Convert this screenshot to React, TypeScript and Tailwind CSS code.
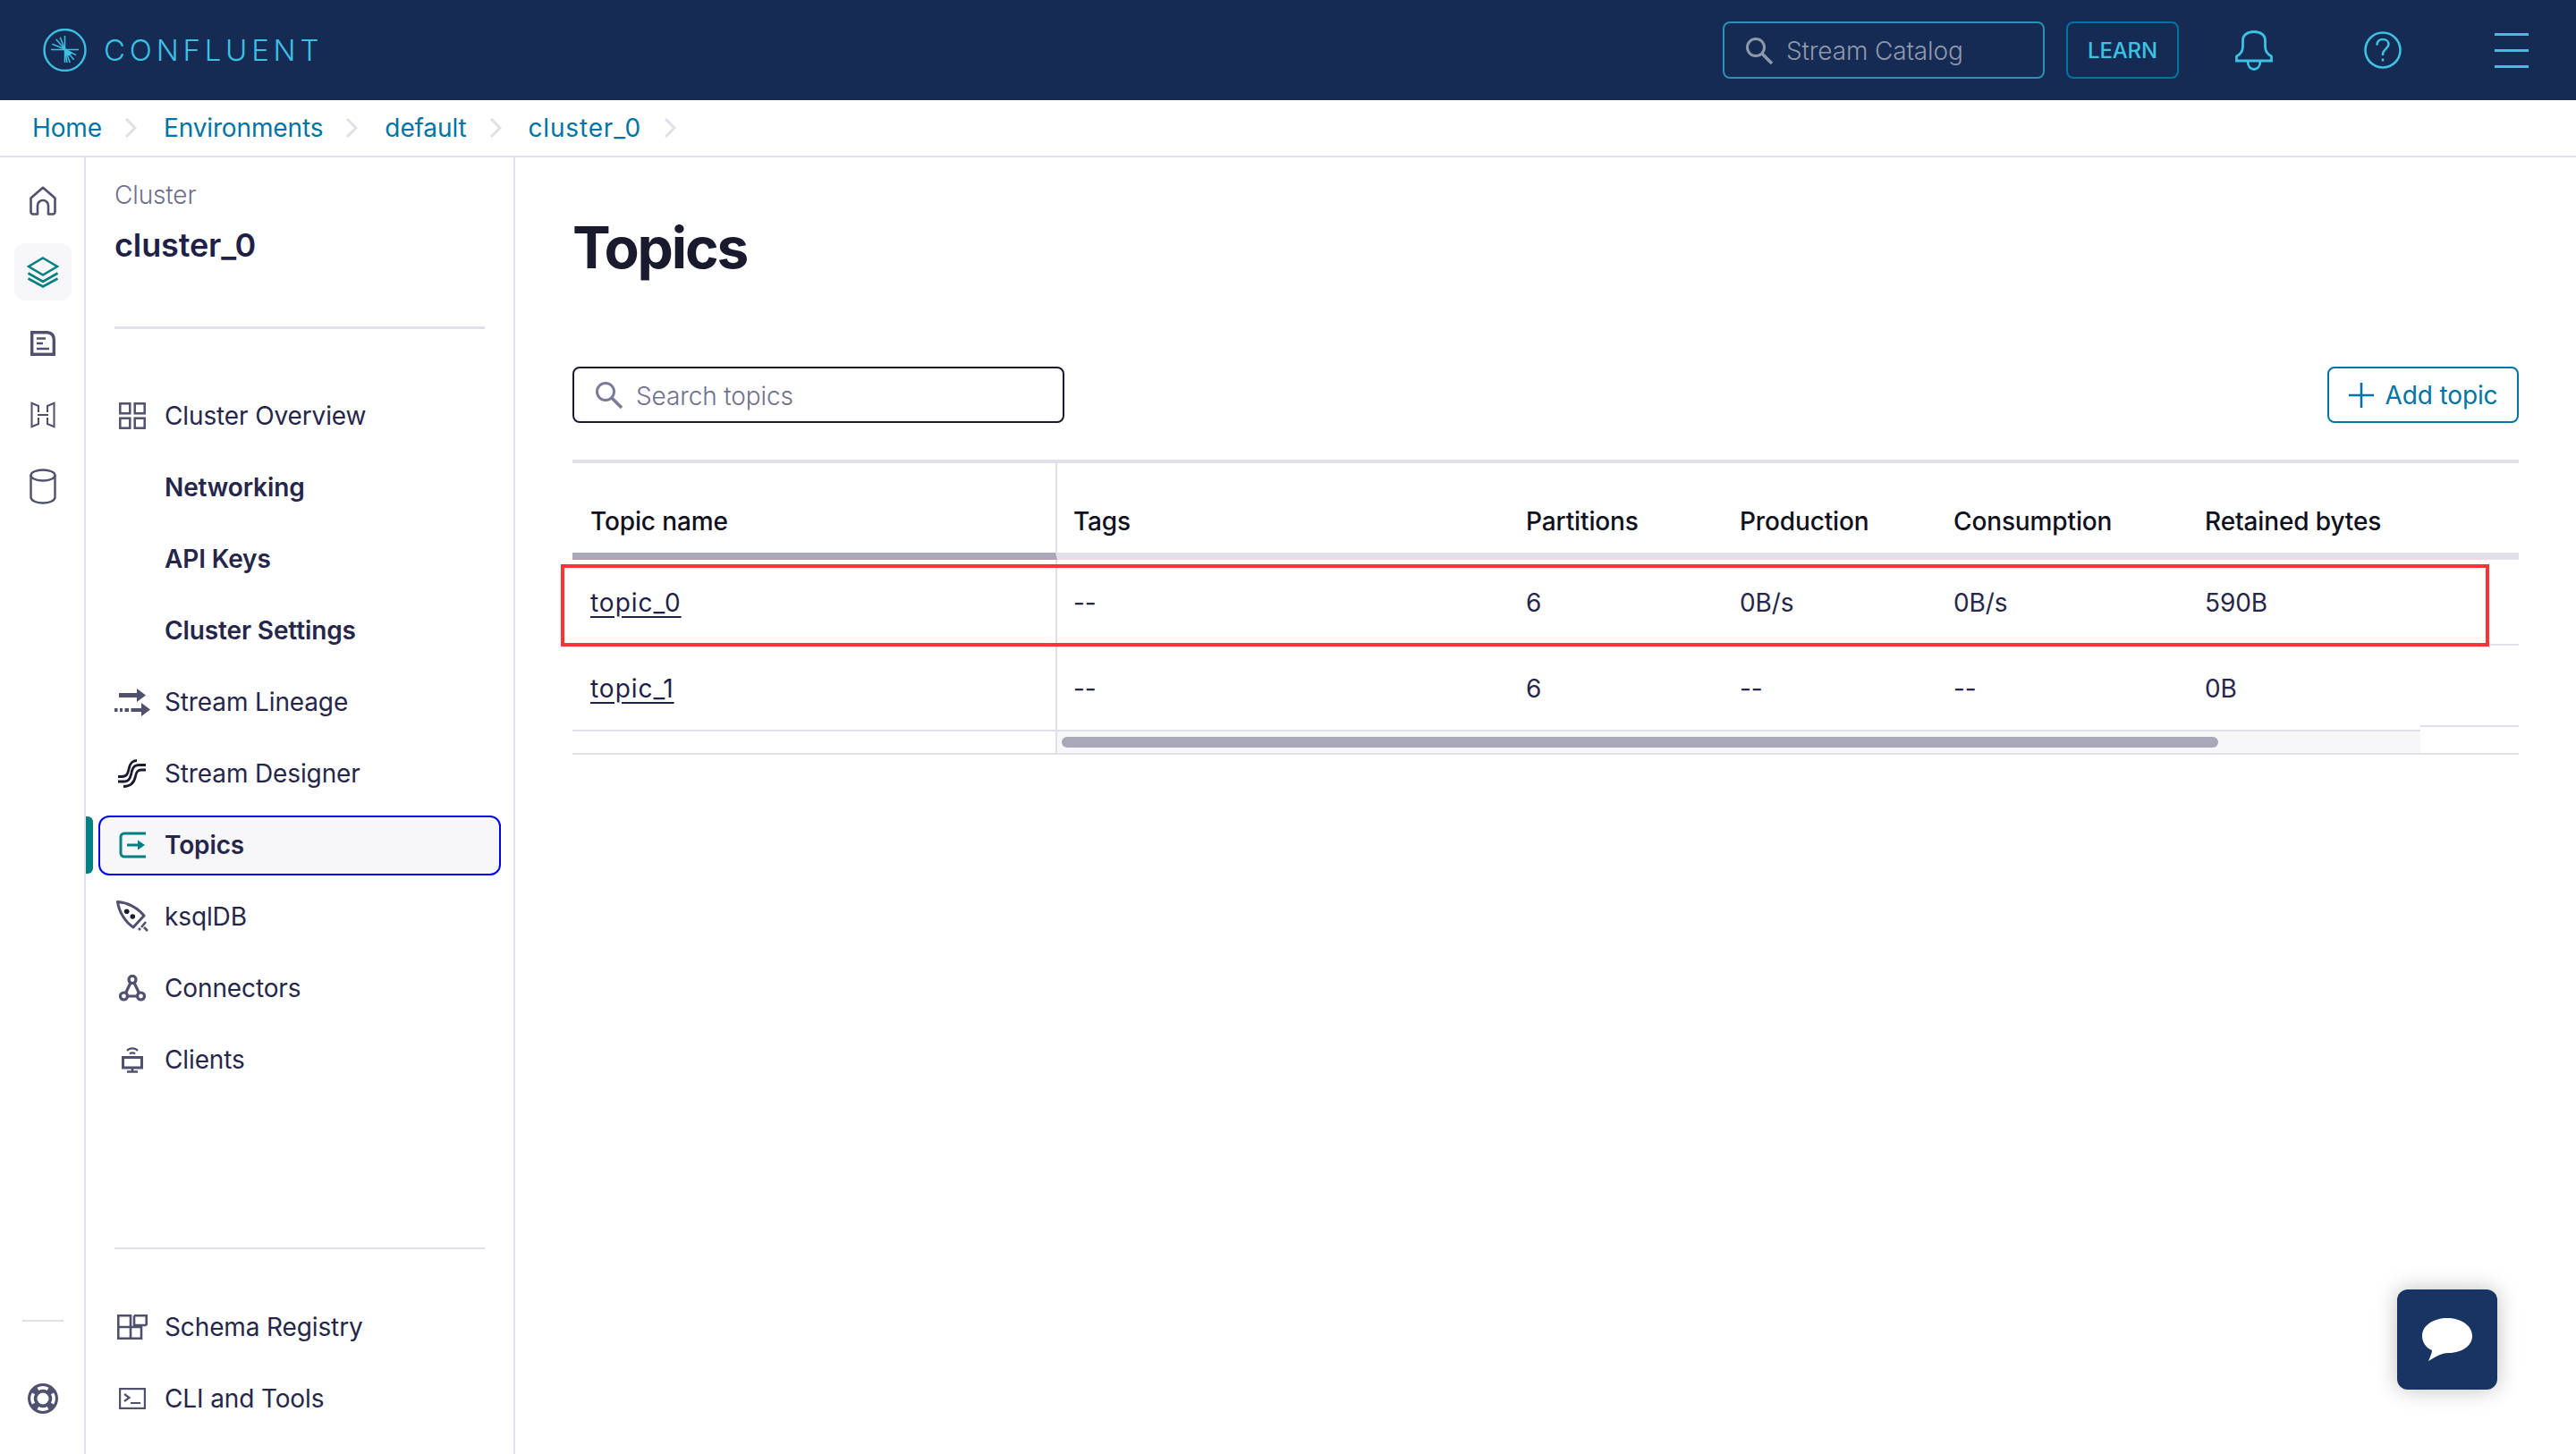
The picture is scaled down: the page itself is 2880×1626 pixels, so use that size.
import type { ReactNode } from "react";

const INK = "#50506f";
const TEAL = "#008080";

function ConfluentMark() {
  const rays = [
    "M24.5 8 V38", "M9 23.5 H40", "M24.5 23 L14.7 12", "M24.5 23 L10.3 17.3", "M24.5 23 L19.3 9.7",
    "M24.5 23 L37 29.7", "M24.5 23 L34.7 34.7", "M24.5 23 L30.3 38", "M24.5 23 L27 38",
  ];
  return (
    <svg width="49" height="48" viewBox="0 0 49 48" fill="none" stroke="#3dc1e3">
      <circle cx="24.5" cy="24" r="23" strokeWidth="2.4" />
      {rays.map((d) => (
        <path key={d} d={d} strokeWidth="1.5" />
      ))}
      <path d="M24.5 23 L33 27.5 L27.5 31 Z" fill="#3dc1e3" stroke="none" />
    </svg>
  );
}

function SearchIcon({ color }: { color: string }) {
  return (
    <svg width="32" height="31" viewBox="0 0 32 31" fill="none" stroke={color} strokeWidth="3">
      <circle cx="12" cy="12" r="9.5" />
      <path d="M19 19 L30 30" strokeWidth="3.5" />
    </svg>
  );
}

function HomeIcon() {
  return (
    <svg width="30" height="33" viewBox="0 0 30 33" fill="none" stroke={INK} strokeWidth="2.6" strokeLinejoin="round">
      <path d="M1.5 13.5 L15 1.8 L28.5 13.5 V29 a2.5 2.5 0 0 1 -2.5 2.5 H21 V22 a6 6 0 0 0 -12 0 V31.5 H4 a2.5 2.5 0 0 1 -2.5 -2.5 Z" />
    </svg>
  );
}

function LayersIcon() {
  return (
    <svg width="36" height="35" viewBox="0 0 36 35" fill="none" stroke={TEAL} strokeWidth="2.6">
      <path d="M18 1.5 L34 11 L18 20.5 L2 11 Z" />
      <path d="M1.5 18.5 L18 28 L34.5 18.5" />
      <path d="M1.5 24.5 L18 33.5 L34.5 24.5" />
    </svg>
  );
}

function DocIcon() {
  return (
    <svg width="28" height="28" viewBox="0 0 28 28" fill="none" stroke={INK} strokeWidth="3.4">
      <path d="M1.7 1.7 H19 Q26.3 2.5 26.3 10 V26.3 H1.7 Z" />
      <path d="M7 8.5 H17 M7 14 H14 M7 20 H21" strokeWidth="2.6" />
    </svg>
  );
}

function MapIcon() {
  return (
    <svg width="28" height="30" viewBox="0 0 28 30" fill="none" stroke={INK} strokeWidth="2">
      <path d="M9 12 V5 L1.5 1.8 V28.2 L9 25 V18" />
      <path d="M19 12 V5 L26.5 1.8 V28.2 L19 25 V18" />
      <path d="M8 15 H20" />
    </svg>
  );
}

function CylinderIcon() {
  return (
    <svg width="30" height="40" viewBox="0 0 30 40" fill="none" stroke={INK} strokeWidth="2.4">
      <ellipse cx="15" cy="7.5" rx="13.5" ry="6" />
      <path d="M1.5 7.5 V32 C1.5 36 8 38.5 15 38.5 C22 38.5 28.5 36 28.5 32 V7.5" />
    </svg>
  );
}

function LifebuoyIcon() {
  return (
    <svg width="34" height="34" viewBox="0 0 34 34" fill="none">
      <circle cx="17" cy="17" r="17" fill={INK} />
      <circle cx="17" cy="17" r="6.5" fill="#fff" />
      <path
        d="M11.4 6.4 A12 12 0 0 1 22.6 6.4 M27.6 11.4 A12 12 0 0 1 27.6 22.6 M22.6 27.6 A12 12 0 0 1 11.4 27.6 M6.4 22.6 A12 12 0 0 1 6.4 11.4"
        stroke="#fff"
        strokeWidth="3.6"
      />
    </svg>
  );
}

function OverviewIcon() {
  return (
    <svg width="30" height="30" viewBox="0 0 30 30" fill="none" stroke={INK} strokeWidth="2.5">
      <rect x="1.3" y="1.3" width="11" height="11" />
      <rect x="17.7" y="1.3" width="11" height="11" />
      <rect x="1.3" y="17.7" width="11" height="11" />
      <rect x="17.7" y="17.7" width="11" height="11" />
    </svg>
  );
}

function LineageIcon() {
  return (
    <svg width="40" height="31" viewBox="0 0 40 31" fill={INK}>
      <path d="M5 5 H25 V0 L35 7.5 L25 15 V10 H5 Z" />
      <path d="M0 22 H3.5 V26 H0 Z M6 22 H9 V26 H6 Z M11.5 22 H16 V26 H11.5 Z M18.5 22 H30 V16 L40 23.5 L30 31 V26 H18.5 Z" />
    </svg>
  );
}

function DesignerIcon() {
  return (
    <svg width="32" height="32" viewBox="0 0 32 32" fill="none" stroke="#1a1a2e" strokeWidth="2.8">
      <path d="M0 19.5 H4 C10 19.5 11 16 12 11 C13.5 4 16 1.5 21 1.5" />
      <path d="M0 25 H6 C13 25 14 20 15.5 13 C17 8 19 6.5 24 6.5 H31" />
      <path d="M6 30.5 C14 30.5 18 27 19.5 19 C20.5 14 22 12 26 12 H31" />
    </svg>
  );
}

function TopicsIcon() {
  return (
    <svg width="30" height="30" viewBox="0 0 30 30" fill="none" stroke={TEAL} strokeWidth="3">
      <path d="M30 2 H6 a4 4 0 0 0 -4 4 V24 a4 4 0 0 0 4 4 H30" />
      <path d="M9 15 H24" />
      <path d="M21 9.5 L29 15 L21 20.5 Z" fill={TEAL} stroke="none" />
    </svg>
  );
}

function KsqlIcon() {
  return (
    <svg width="36" height="36" viewBox="0 0 36 36" fill="none" stroke={INK} strokeWidth="3">
      <path d="M1.5 1.5 C12 2 24 8 31 17 L19 30 C10 24 3 13 1.5 1.5 Z" strokeLinejoin="round" />
      <circle cx="11.7" cy="12.3" r="2.8" fill="#1a1a2e" stroke="none" />
      <circle cx="18.3" cy="18" r="2.8" fill="#1a1a2e" stroke="none" />
      <path d="M33 24 L28 30 M25 31 L27 33 M31 30 L35 34" strokeWidth="2.6" />
    </svg>
  );
}

function ConnectorsIcon() {
  return (
    <svg width="30" height="30" viewBox="0 0 30 30" fill="none" stroke={INK} strokeWidth="3.2">
      <circle cx="15" cy="5.5" r="4" />
      <circle cx="5.5" cy="24" r="4" />
      <circle cx="24.5" cy="24" r="4" />
      <path d="M13 9 L7.5 20.5 M17 9 L22.5 20.5 M9.5 24 H20.5" />
    </svg>
  );
}

function ClientsIcon() {
  return (
    <svg width="24" height="30" viewBox="0 0 24 30" fill="none" stroke={INK} strokeWidth="2.2">
      <path d="M6 5 C9 1.5 15 1.5 18 5" />
      <path d="M9 8.5 C10.5 7 13.5 7 15 8.5" />
      <rect x="1.5" y="12.5" width="21" height="11.5" strokeWidth="3" />
      <path d="M12 24 V28 M6 28.5 H18" strokeWidth="2.6" />
    </svg>
  );
}

function SchemaIcon() {
  return (
    <svg width="34" height="28" viewBox="0 0 34 28" fill="none" stroke={INK} strokeWidth="2.6">
      <path d="M1.3 1.3 H15 V26.7 H1.3 Z" />
      <path d="M1.3 14 H27 V26.7 H15" />
      <path d="M19 1.3 H32.7 V12 M19 1.3 V12 H32.7" />
    </svg>
  );
}

function CliIcon() {
  return (
    <svg width="30" height="24" viewBox="0 0 30 24" fill="none" stroke={INK} strokeWidth="2.2">
      <rect x="1.1" y="1.1" width="27.8" height="21.8" />
      <path d="M6 7 L11.5 11 L6 15 M13 17 H24" />
    </svg>
  );
}

function BellIcon() {
  return (
    <svg width="42" height="45" viewBox="0 0 42 45" fill="none" stroke="#3dc1e3" strokeWidth="2.8">
      <path d="M1.5 34 V29 C7 26 8.5 23 8.5 18 V11 C8.5 5 14 1.5 21 1.5 C28 1.5 33.5 5 33.5 11 V18 C33.5 23 35 26 40.5 29 V34 Z" />
      <path d="M14 34 C14 40 17 43.5 21 43.5 C25 43.5 28 40 28 34" />
    </svg>
  );
}

function HelpIcon() {
  return (
    <svg width="42" height="42" viewBox="0 0 42 42" fill="none" stroke="#3dc1e3" strokeWidth="2.6">
      <circle cx="21" cy="21" r="19.5" />
      <path d="M14.5 15.5 C14.5 11 17.5 9 21 9 C25 9 27.5 11.5 27.5 14.5 C27.5 19 22 19.5 21 25 V27" />
      <path d="M21 30.5 V33.5" />
    </svg>
  );
}

function NavItem({ icon, label, bold, active }: { icon?: ReactNode; label: string; bold?: boolean; active?: boolean }) {
  return (
    <div className="relative flex h-20 items-center justify-center">
      {active && <span className="absolute left-0 top-2 h-[64px] w-2 rounded-r-md bg-[#008080]" />}
      <div
        className={`flex h-[67px] w-[450px] items-center rounded-xl border-2 pl-2 ${
          active ? "border-[#0000ee] bg-[#f7f7fa]" : "border-transparent"
        }`}
      >
        <span className="flex w-[55px] shrink-0 items-center justify-center">{icon}</span>
        <span className={`ml-[9px] text-[28px] ${bold ? "font-semibold" : "font-normal"}`}>{label}</span>
      </div>
    </div>
  );
}

const crumbs = ["Home", "Environments", "default", "cluster_0"];

const columns = [
  { name: "Topic name", className: "border-r-2 border-[#e0e0e8] border-b-[#a8a8b8] pl-5" },
  { name: "Tags", className: "border-[#e0e0e8] pl-[18px]" },
  { name: "Partitions", className: "border-[#e0e0e8] pl-[19px]" },
  { name: "Production", className: "border-[#e0e0e8] pl-[19px]" },
  { name: "Consumption", className: "border-[#e0e0e8] pl-[19px]" },
  { name: "Retained bytes", className: "border-[#e0e0e8] pl-[18px]" },
];

const rows = [
  ["topic_0", "--", "6", "0B/s", "0B/s", "590B"],
  ["topic_1", "--", "6", "--", "--", "0B"],
];

const gridCols = "grid grid-cols-[542px_505px_239px_239px_282px_369px]";

export default function App() {
  return (
    <div className="relative flex h-[1626px] w-[2880px] flex-col overflow-hidden bg-white font-['Inter',sans-serif] tracking-[-0.008em] text-[#26264a]">
      <header className="flex h-[112px] shrink-0 items-center bg-[#162b54] pl-12 pr-[53px]">
        <ConfluentMark />
        <span className="ml-[19px] text-[33px] font-light leading-none tracking-[0.145em] text-[#3dc1e3]">CONFLUENT</span>
        <div className="ml-auto flex h-16 w-[360px] items-center rounded-lg border-2 border-[#2f8fb8] pl-[23px]">
          <SearchIcon color="#8f99ac" />
          <span className="ml-[14px] pt-[2px] text-[28px] font-light text-[#8f99ac]">Stream Catalog</span>
        </div>
        <button
          type="button"
          className="ml-6 flex h-16 w-[126px] items-center justify-center rounded-lg border-2 border-[#0074a2] pt-[2px] text-2xl font-medium text-[#3dc1e3]"
        >
          LEARN
        </button>
        <span className="ml-[63px] flex"><BellIcon /></span>
        <span className="ml-[102px] flex"><HelpIcon /></span>
        <div className="ml-[104px] flex w-[38px] flex-col gap-[15px]">
          <span className="h-[3px] bg-[#3dc1e3]" />
          <span className="h-[3px] bg-[#3dc1e3]" />
          <span className="h-[3px] bg-[#3dc1e3]" />
        </div>
      </header>

      <nav className="flex h-16 shrink-0 items-center border-b-2 border-[#e0e0e8] pl-[36px] text-[28px] text-[#0074a2]">
        {crumbs.map((crumb) => (
          <span key={crumb} className="flex items-center">
            <span className={crumb.includes("_") ? "tracking-[0.03em]" : ""}>{crumb}</span>
            <svg className="ml-[25px] mr-[30px]" width="14" height="22" viewBox="0 0 14 22" fill="none" stroke="#e0e0e8" strokeWidth="3">
              <path d="M2 1 L12 11 L2 21" />
            </svg>
          </span>
        ))}
      </nav>

      <div className="flex min-h-0 flex-1">
        <aside className="flex w-[96px] shrink-0 flex-col items-center border-r-2 border-[#e0e0e8] pb-[22px] pl-[2px] pt-2">
          <div className="flex h-20 items-center justify-center"><HomeIcon /></div>
          <div className="flex h-20 items-center justify-center">
            <div className="flex h-16 w-16 items-center justify-center rounded-xl bg-[#f7f7fa]"><LayersIcon /></div>
          </div>
          <div className="flex h-20 items-center justify-center"><DocIcon /></div>
          <div className="flex h-20 items-center justify-center"><MapIcon /></div>
          <div className="flex h-20 items-center justify-center"><CylinderIcon /></div>
          <div className="mt-auto h-[2px] w-[46px] bg-[#e0e0e8]" />
          <div className="mt-[46px] flex h-20 items-center justify-center"><LifebuoyIcon /></div>
        </aside>

        <aside className="flex w-[480px] shrink-0 flex-col border-r-2 border-[#e0e0e8] pb-[22px]">
          <div className="px-8">
            <p className="pt-6 text-[28px] font-light leading-9 text-[#6f6f8c]">Cluster</p>
            <p className="mt-4 text-[36px] font-semibold leading-[44px] text-[#1f1f47]">cluster_0</p>
            <div className="mt-[69px] h-[3px] w-[414px] bg-[#e0e0e8]" />
          </div>
          <div className="mt-[57px]">
            <NavItem icon={<OverviewIcon />} label="Cluster Overview" />
            <NavItem label="Networking" bold />
            <NavItem label="API Keys" bold />
            <NavItem label="Cluster Settings" bold />
            <NavItem icon={<LineageIcon />} label="Stream Lineage" />
            <NavItem icon={<DesignerIcon />} label="Stream Designer" />
            <NavItem icon={<TopicsIcon />} label="Topics" bold active />
            <NavItem icon={<KsqlIcon />} label="ksqlDB" />
            <NavItem icon={<ConnectorsIcon />} label="Connectors" />
            <NavItem icon={<ClientsIcon />} label="Clients" />
          </div>
          <div className="mt-auto px-8 pb-[47px]">
            <div className="h-[2px] w-[414px] bg-[#e0e0e8]" />
          </div>
          <NavItem icon={<SchemaIcon />} label="Schema Registry" />
          <NavItem icon={<CliIcon />} label="CLI and Tools" />
        </aside>

        <main className="min-w-0 flex-1 px-16 pt-[61px]">
          <h1 className="text-[64px] font-bold leading-[80px] tracking-[-0.034em] text-[#1a1a2e]">Topics</h1>

          <div className="mt-[93px] flex items-center justify-between">
            <div className="flex h-[63px] w-[550px] items-center rounded-lg border-2 border-[#1a1a2e] pl-[23px]">
              <SearchIcon color="#7a7a9a" />
              <input
                placeholder="Search topics"
                className="ml-[14px] flex-1 bg-transparent pt-[2px] text-[28px] font-light outline-none placeholder:text-[#6f6f90]"
              />
            </div>
            <button
              type="button"
              className="flex h-[63px] w-[214px] items-center justify-center gap-[13px] rounded-lg border-2 border-[#0074a2] text-[28px] text-[#0074a2]"
            >
              <svg width="28" height="28" viewBox="0 0 28 28" stroke="#0074a2" strokeWidth="2.6">
                <path d="M14 0 V28 M0 14 H28" />
              </svg>
              Add topic
            </button>
          </div>

          <div className="relative mt-[41px] border-t-4 border-[#e0e0e8]">
            <div className={gridCols}>
              {columns.map((col) => (
                <div key={col.name} className={`h-[108px] border-b-8 pt-[47px] text-[28px] font-medium leading-9 text-[#10101e] ${col.className}`}>
                  {col.name}
                </div>
              ))}
            </div>

            {rows.map((row) => (
              <div key={row[0]} className={`${gridCols} h-[96px] border-b-2 border-[#e0e0e8] text-[28px] text-[#26264a]`}>
                {row.map((value, i) => (
                  <div
                    key={i}
                    className={`flex items-center pt-[1px] ${
                      i === 0 ? "border-r-2 border-[#e0e0e8] pl-5" : i === 1 || i === 5 ? "pl-[18px]" : "pl-[19px]"
                    }`}
                  >
                    {i === 0 ? <a className="tracking-[0.035em] text-[#1f1f47] underline underline-offset-[5px]">{value}</a> : value}
                  </div>
                ))}
              </div>
            ))}

            <div className="flex h-[26px] border-b-2 border-[#e0e0e8]">
              <div className="w-[542px] shrink-0 border-r-2 border-[#e0e0e8]" />
              <div className="flex w-[1524px] shrink-0 items-center bg-[#f7f7fa] pl-[5px]">
                <div className="h-3 w-[1293px] rounded-full bg-[#a8a8b8]" />
              </div>
            </div>

            {/* the scrollbar corner sits a few px above the last row's rule */}
            <div className="absolute bottom-[2px] right-0 h-[31px] w-[110px] border-t-2 border-[#e0e0e8] bg-white" />

            {/* red annotation drawn over the first row */}
            <div className="absolute left-[-13px] top-[113px] h-[92px] w-[2156px] border-4 border-[#ff3333]" />
          </div>
        </main>
      </div>

      <button
        type="button"
        className="absolute left-[2680px] top-[1442px] flex h-[112px] w-[112px] items-center justify-center rounded-xl bg-[#183463] shadow-[0_0_24px_rgba(0,0,0,0.25)]"
      >
        <svg width="58" height="50" viewBox="0 0 58 50" fill="#fff">
          <path d="M29 1 C44 1 57 9 57 21 C57 33 44 40 30 40 C24 40 18 43 8 49 C10 44 12 40 12 37 C5 34 1 28 1 21 C1 9 14 1 29 1 Z" />
        </svg>
      </button>
    </div>
  );
}
